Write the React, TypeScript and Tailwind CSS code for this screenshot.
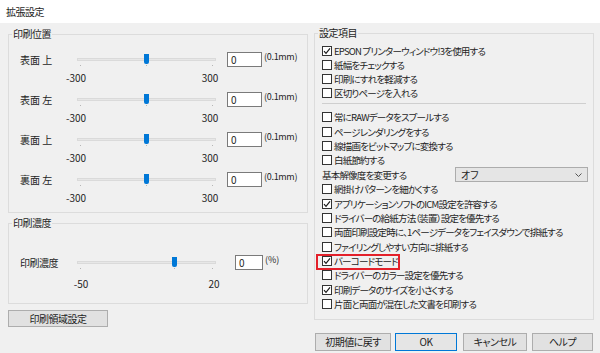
import React from "react";

const CheckMark = () => (
  <svg width="8" height="8" viewBox="0 0 8 8" className="block">
    <polyline points="1,4.2 3,6.4 7,1.4" fill="none" stroke="#1a1a1a" strokeWidth="1.2" />
  </svg>
);

const Checkbox = ({ checked }: { checked?: boolean }) => (
  <span className="flex h-[10px] w-[10px] shrink-0 items-center justify-center border border-[#333] bg-white">
    {checked && <CheckMark />}
  </span>
);

const Slider = ({ pos }: { pos: number }) => (
  <div className="relative h-[15px] w-[139px]">
    <div className="absolute left-0 right-0 top-[6px] h-[3px] border border-[#dadada] bg-[#e7e7e7]" />
    <div className="absolute top-[13px] left-[3px] h-[1px] w-[1px] bg-[#b5b5b5]" />
    <div className="absolute top-[13px] h-[1px] w-[1px] bg-[#b5b5b5]" style={{ left: pos }} />
    <div className="absolute top-[13px] left-[135px] h-[1px] w-[1px] bg-[#b5b5b5]" />
    <div
      className="absolute top-[2px] h-[10px] w-[5px] rounded-b-[2px] bg-[#0078d7]"
      style={{ left: pos - 2 }}
    />
  </div>
);

const PositionRow = ({ label }: { label: string }) => (
  <div className="h-[40px]">
    <div className="flex h-[15px] items-center">
      <span className="w-[68px] pl-[11px]">{label}</span>
      <Slider pos={69} />
      <div className="ml-[11px] flex h-[15px] w-[35px] items-center border border-[#7a7a7a] bg-white pl-[3px]">
        0
      </div>
      <span className="ml-[2px] self-start text-[9px] leading-[10px] tracking-[-0.3px]">(0.1mm)</span>
    </div>
    <div className="mt-[5px] flex h-[12px] w-[216px] justify-between pl-[52px]">
      <span className="w-[30px] text-center">-300</span>
      <span className="w-[30px] text-center">300</span>
    </div>
  </div>
);

const items1 = [
  { t: "EPSON プリンターウィンドウ!3を使用する", c: true },
  { t: "紙幅をチェックする" },
  { t: "印刷にすれを軽減する" },
  { t: "区切りページを入れる" },
];

const items2a = [
  { t: "常にRAWデータをスプールする" },
  { t: "ページレンダリングをする" },
  { t: "線描画をビットマップに変換する" },
  { t: "白紙節約する" },
];

const items2b = [
  { t: "網掛けパターンを細かくする" },
  { t: "アプリケーションソフトのICM設定を許容する", c: true },
  { t: "ドライバーの給紙方法（装置）設定を優先する" },
  { t: "両面印刷設定時に、1ページデータをフェイスダウンで排紙する" },
  { t: "ファイリングしやすい方向に排紙する" },
  { t: "バーコードモード", c: true, hl: true },
  { t: "ドライバーのカラー設定を優先する" },
  { t: "印刷データのサイズを小さくする", c: true },
  { t: "片面と両面が混在した文書を印刷する" },
];

const CheckRow = ({ t, c, hl, h }: { t: string; c?: boolean; hl?: boolean; h: string }) => (
  <div className={`relative flex items-center pl-[7px] ${h}`}>
    <Checkbox checked={c} />
    <span className="ml-[2px] whitespace-nowrap text-[9.5px] tracking-[-0.8px]">{t}</span>
    {hl && (
      <div className="absolute left-[1px] top-0 h-[16px] w-[84px] border-2 border-[#e3202a]" />
    )}
  </div>
);

const Button = ({ children, w, primary }: { children: React.ReactNode; w: string; primary?: boolean }) => (
  <button
    className={`flex h-[18px] items-center justify-center border ${w} ${
      primary ? "border-[#0078d7] bg-[#e5e5e5]" : "border-[#adadad] bg-[#e1e1e1]"
    }`}
  >
    {children}
  </button>
);

export default function App() {
  return (
    <div className="h-[353px] w-[600px] overflow-hidden bg-[#f0f0f0] text-[10px] leading-[12px] text-[#1e1e1e] [font-family:'Noto_Sans_CJK_JP',sans-serif] [font-feature-settings:'palt']">
      <div className="flex h-[23px] items-center bg-white pl-[6px] tracking-[-0.5px]">拡張設定</div>
      <div className="flex">
        {/* left column */}
        <div className="ml-[8px] w-[300px]">
          <fieldset className="mt-[5px] border border-[#dcdcdc]">
            <legend className="ml-[3px] px-[1px] leading-[12px] tracking-[-0.5px]">印刷位置</legend>
            <div className="mt-[12px]">
              <PositionRow label="表面 上" />
              <PositionRow label="表面 左" />
              <PositionRow label="裏面 上" />
              <PositionRow label="裏面 左" />
            </div>
          </fieldset>
          <fieldset className="mt-[4px] border border-[#dcdcdc] pb-[13px]">
            <legend className="ml-[3px] px-[1px] leading-[12px] tracking-[-0.5px]">印刷濃度</legend>
            <div className="mt-[26px]">
              <div className="flex h-[15px] items-center">
                <span className="w-[68px] pl-[11px] tracking-[-0.5px]">印刷濃度</span>
                <Slider pos={97} />
                <div className="ml-[19px] flex h-[15px] w-[28px] items-center border border-[#7a7a7a] bg-white pl-[3px]">
                  0
                </div>
                <span className="ml-[2px] self-start text-[9px] leading-[10px]">(%)</span>
              </div>
              <div className="mt-[8px] flex h-[12px] w-[220px] justify-between pl-[57px]">
                <span className="w-[30px] text-center">-50</span>
                <span className="w-[30px] text-center">20</span>
              </div>
            </div>
          </fieldset>
          <button className="mt-[6px] flex h-[17px] w-[100px] items-center justify-center border border-[#adadad] bg-[#e1e1e1] tracking-[-0.5px]">
            印刷領域設定
          </button>
        </div>

        {/* right column */}
        <div className="ml-[6px] w-[280px]">
          <fieldset className="mt-[4px] h-[293px] border border-[#dcdcdc]">
            <legend className="ml-[3px] px-[1px] leading-[12px] tracking-[-0.5px]">設定項目</legend>
            <div className="mt-[5px]">
              {items1.map((it) => (
                <CheckRow key={it.t} {...it} h="h-[14px]" />
              ))}
            </div>
            <div className="mx-[7px] mb-[5px] mt-[3px] h-[2px] border-t border-[#cfcfcf] border-b-white" />
            {items2a.map((it) => (
              <CheckRow key={it.t} {...it} h="h-[14.4px]" />
            ))}
            <div className="flex h-[14.4px] items-center justify-between pl-[7px] pr-[5px]">
              <span className="text-[9.5px] tracking-[-0.8px]">基本解像度を変更する</span>
              <div className="flex h-[15px] w-[133px] items-center justify-between border border-[#acacac] bg-[#e5e5e5] pl-[5px] pr-[5px]">
                <span>オフ</span>
                <svg width="7" height="4" viewBox="0 0 7 4">
                  <polyline points="0.5,0.5 3.5,3.5 6.5,0.5" fill="none" stroke="#555" strokeWidth="1" />
                </svg>
              </div>
            </div>
            {items2b.map((it) => (
              <CheckRow key={it.t} {...it} h="h-[14.4px]" />
            ))}
          </fieldset>
          <div className="mt-[13px] flex pl-[1px] tracking-[-0.5px]">
            <Button w="w-[76px]">初期値に戻す</Button>
            <div className="ml-[4px]">
              <Button w="w-[62px]" primary>
                OK
              </Button>
            </div>
            <div className="ml-[6px]">
              <Button w="w-[64px]">キャンセル</Button>
            </div>
            <div className="ml-[5px]">
              <Button w="w-[61px]">ヘルプ</Button>
            </div>
          </div>
        </div>
      </div>
    </div>
  );
}
